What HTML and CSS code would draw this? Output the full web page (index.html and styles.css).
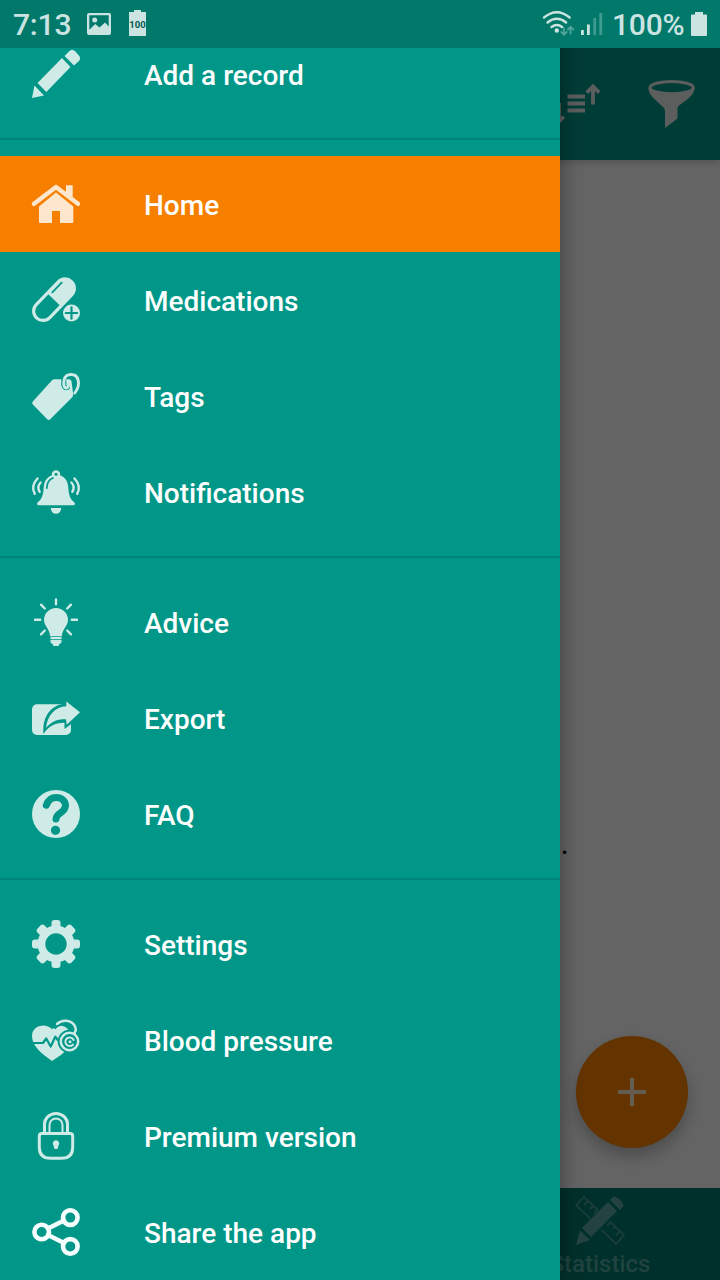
FILE: index.html
```html
<!DOCTYPE html>
<html lang="en">
<head>
<meta charset="utf-8">
<title>Home</title>
<link rel="stylesheet" href="styles.css">
</head>
<body>
<div class="screen">
  <div class="page">
    <header class="appbar">
      <svg class="sort" viewBox="0 0 48 48"><path d="M15.500 16.500h17.500M15.500 23.500h17.500M15.500 30.500h17.500M41 24.500V7M34.800 12.700L41 6.500l6.200 6.200M7 23v18M1.500 36l5.500 5.500 4.800-5"/></svg>
      <svg class="funnel" viewBox="0 0 48 48"><path d="M.5 8c0 5 3 8 6 11l9 8.500c1 1 1.500 2 1.500 4V48l12.500-9.500V29c0-1.500.5-2.500 1.500-3.500l9.500-7c3-3 6-6 6-10.500z"/><ellipse cx="23.700" cy="7.700" rx="21.600" ry="6.200"/></svg>
    </header>
    <main class="content">
      <p class="message">.</p>
      <button class="fab" aria-label="Add"><svg viewBox="0 0 28 28"><path d="M14 0v28M0 14h28"/></svg></button>
    </main>
    <nav class="tabs">
      <div class="tab">
        <svg viewBox="0 0 48 48">
          <path class="ruler" d="M0 8L8 0l40 38-8 9zM12 4l-4 4M17 9l-3 3M22 13l-4 4M35 25l-4 4M40 29l-3 3M44 34l-4 4"/>
          <path class="pen-gap" d="M8 30L36 2l9 9-28 28L1 47z"/>
          <path d="M0 48l4-15 10 10zM6 31L32 5l9 9-26 26zM34 3l3-3c3-2 13 7 10 10l-3 3z"/>
        </svg>
        <span>Statistics</span>
      </div>
    </nav>
  </div>
  <div class="scrim"></div>

  <aside class="drawer">
    <ul class="group">
      <li class="item"><svg viewBox="0 0 48 48"><path d="M0 48L2.500 35.500 12 45.500zM5.500 33L30 8l8.500 9-24.200 25zM32.500 6l4.200-4.300c2-2.200 4.500-2.200 6.500-.4L46.500 5c2 2 2 4.300.5 6l-5 4.500z"/></svg><span>Add a record</span></li>
    </ul>
    <ul class="group">
      <li class="item active"><svg viewBox="0 0 48 48"><path d="M34 5.300h6.700v13L34 13zM7 26.500L24 12.500l17.300 14V42q0 1-1 1H28V31h-8v12H8q-1 0-1-1z"/><path class="line roof" d="M2 23.800L24 6.900l22 16.900"/></svg><span>Home</span></li>
      <li class="item"><svg viewBox="0 0 48 48">
        <g transform="translate(22 23.700) rotate(-46)"><rect class="line" x="-25.200" y="-9.400" width="50.400" height="18.800" rx="9.400"/><path d="M0-10h16a10 10 0 0 1 0 20H0z"/></g>
        <path class="cut thin" d="M20.300 16.300l9.400-9.600"/><circle class="hole" cx="39.500" cy="37" r="10.200"/><circle cx="39.500" cy="37" r="8.500"/><path class="cut" d="M39.500 31.300v11.400M33.800 37h11.400"/></svg><span>Medications</span></li>
      <li class="item"><svg viewBox="0 0 48 48"><path d="M22.500 7.300L37 7.300q2 0 2.500 2l1.700 13q.2 2-1.200 3.300L18.500 47q-1.800 1.800-3.300.2L.8 32.500q-1.500-1.700.2-3.200L20 8.300q1-1 2.500-1z"/><path class="cut wide" d="M31.800 8v5q.8 3.500 3.500 2.500"/><path class="line ring" d="M42.800 21c3-4 4.300-9.500 3.300-13-2-7.500-12.500-7-14 0-.6 3-.6 7.500 2 8 1.700.2 2.200-1 2.200-3"/></svg><span>Tags</span></li>
      <li class="item"><svg viewBox="0 0 48 48"><path d="M24 2.200a4 4 0 0 1 4 5.100c5 1.800 8 6 8.300 12.200.4 7 1.700 11.500 5.700 14.500 1.700 1.500 1 3.200-.7 3.200H6.700c-1.700 0-2.400-1.700-.7-3.200 4-3 5.300-7.500 5.700-14.500C12 13.300 15 9.100 20 7.300a4 4 0 0 1 4-5.100zM18.800 40h10.400c-.3 7.800-10.100 7.800-10.400 0z"/><circle class="hole" cx="24" cy="6.200" r="1.500"/><path class="cut thin" d="M14.800 20c.2-5 2.200-8.500 6.200-10"/><path class="line wave" d="M8.600 14.500q-4 4.200-.9 9.300M5.500 10.500q-7 7.500-2.700 15.300M39.400 14.500q4 4.200.9 9.300M42.500 10.500q7 7.500 2.700 15.300"/></svg><span>Notifications</span></li>
    </ul>
    <ul class="group">
      <li class="item"><svg viewBox="0 0 48 48"><path d="M24 10a12 12 0 0 1 12 12c0 6-5.500 8.500-6.200 16.200h-11.600C17.500 30.500 12 28 12 22a12 12 0 0 1 12-12zM18.500 39h11v2.200h-11zM18.500 42h11V44q0 1.500-2 1.800L26.500 48h-5l-1-2.200q-2-.3-2-1.800z"/><path class="line ray" d="M24 1.500v4.800M3 21.700h5.300M39.700 21.700h5.300M9 6.700l3.800 3.800M39 6.700l-3.800 3.800M9 36.300l3.800-3.800M39 36.300l-3.800-3.800"/></svg><span>Advice</span></li>
      <li class="item"><svg viewBox="0 0 48 48"><rect y="10.300" width="39" height="30.700" rx="5"/><path class="hole" d="M32 5l1 4.500C20 11 10 21 11.500 40c5-8 12-11.500 21-11.300V35L42 28l5-18z"/><path d="M34.300 7.500L48 18.300 34.700 30.700l-.7-5.400c-8.500-.3-14.500 2.200-20 8.500 1.500-12.500 9-21 20.300-21.500z"/></svg><span>Export</span></li>
      <li class="item"><svg viewBox="0 0 48 48"><circle cx="24" cy="24" r="24"/><path class="cut question" d="M14.300 15.200c2-5.200 5.300-7.700 10-7.700 5.200 0 9.200 3.500 9.200 8 0 7.500-9.300 7.200-9.500 13.500"/><circle class="hole" cx="23.500" cy="40.300" r="4.600"/></svg><span>FAQ</span></li>
    </ul>
    <ul class="group">
      <li class="item"><svg viewBox="0 0 48 48"><circle cx="24" cy="24" r="18.500"/><rect x="19.500" width="9" height="48" rx="3"/><rect y="19.500" width="48" height="9" rx="3"/><rect x="19" width="10" height="48" rx="3" transform="rotate(45 24 24)"/><rect x="19" width="10" height="48" rx="3" transform="rotate(-45 24 24)"/><circle class="hole" cx="24" cy="24" r="10.700"/></svg><span>Settings</span></li>
      <li class="item"><svg viewBox="0 0 48 48"><path d="M20 45C10 38 0 30 0 20 0 10 13 6 20 13.300 26 7 34 9 37 15v17C32 37 26 41 20 45z"/><circle class="hole" cx="37.500" cy="25.500" r="11.700"/><path class="cut" d="M23 12c5-6 16-5 19 2M0 27h11l3.200-4.500 4.500 8 4.600-9.800 2.500 3.300"/><path class="line tube" d="M25 8c4.500-4.500 13-4.500 17 .7 2.200 3 2 6 .7 8"/><circle class="line tube" cx="37.500" cy="25.500" r="8.700"/><path class="line gauge" d="M41 28.500a4.300 4.300 0 1 1 .6-4.500"/><circle cx="38" cy="25.700" r="1.500"/></svg><span>Blood pressure</span></li>
      <li class="item"><svg viewBox="0 0 48 48"><path class="line lock" d="M10 21.500h28q2.700 0 2.700 2.700V35q0 11.300-11 11.300H18.300Q7.300 46.300 7.300 35V24.200q0-2.700 2.700-2.700zM12.500 21v-8.500a11.500 11.100 0 0 1 23 0V21"/><path class="line gauge" d="M17.500 21v-8a6.500 6.500 0 0 1 13 0v8"/><path d="M24 28.300a3.200 3.200 0 0 1 2.500 5.300l-1 3.400h-3l-1-3.400a3.200 3.200 0 0 1 2.500-5.300z"/></svg><span>Premium version</span></li>
      <li class="item share"><svg viewBox="0 0 48 48"><path class="line" d="M16 20.500l16-8M16 27l16 8"/><circle class="line" cx="38.300" cy="9.600" r="7.300"/><circle class="line" cx="9.700" cy="24" r="7.300"/><circle class="line" cx="38.300" cy="38.400" r="7.300"/></svg><span>Share the app</span></li>
    </ul>
  </aside>

  <div class="status">
    <span class="clock">7:13</span>
    <svg class="photo" viewBox="0 0 24 22"><path fill-rule="evenodd" d="M2 0h20q2 0 2 2v18q0 2-2 2H2q-2 0-2-2V2Q0 0 2 0zM2.300 2.300v14.500l6-5.800 4.200 3.500 5.500-5 3.700 4V2.300z"/><circle cx="7.700" cy="7" r="2.500"/></svg>
    <span class="charge">100</span>
    <svg class="wifi" viewBox="0 0 32 24"><path d="M1 5.500q12.800-10.500 25.600 0M4.500 10.500q9.300-7.500 18.600 0M8.500 15q5.300-4 10.600 0"/><circle cx="13.800" cy="18.500" r="2.200"/><path class="dim" d="M21 16v6.500M18.300 20l2.700 2.700 2.700-2.700M27.500 21.500V15M24.800 17.500l2.700-2.700 2.700 2.700"/></svg>
    <svg class="signal" viewBox="0 0 22 24"><path d="M0 18h2.800v5H0zM6 12.500h2.800V23H6z"/><path class="dim" d="M12.300 6h2.800v17h-2.800zM18.300 1h2.800v22h-2.800z"/></svg>
    <span class="percent">100%</span>
    <svg class="battery" viewBox="0 0 16 24"><path d="M4 0h8v2.500h3q1 0 1 1V23q0 1-1 1H1q-1 0-1-1V3.500q0-1 1-1h3z"/></svg>
  </div>
</div>
</body>
</html>
```
FILE: styles.css
```css
* { box-sizing: border-box; }
body { margin: 0; font-family: Roboto, "Liberation Sans", sans-serif; font-weight: 500; }
svg { display: block; flex: none; overflow: visible; }
.screen { position: relative; width: 720px; height: 1280px; overflow: hidden; }

.page { height: 100%; display: flex; flex-direction: column; background: #fafafa; }
.appbar { height: 160px; padding: 48px 24px 0 0; background: #009788; display: flex; align-items: center; justify-content: flex-end; gap: 48px; box-shadow: 0 2px 8px rgba(0,0,0,.2); }
.appbar svg { width: 48px; height: 48px; }
.sort { fill: none; stroke: #e6eae9; stroke-width: 3.800; }
.funnel { fill: #e6eae9; }
.funnel ellipse { fill: #009788; stroke: #e6eae9; stroke-width: 3.200; }
.content { flex: 1; display: flex; flex-direction: column; justify-content: space-between; align-items: flex-end; padding: 663px 32px 40px 0; }
.message { margin: 0; padding-right: 119px; font-size: 32px; line-height: 40px; font-weight: 400; color: #000; }
.fab { width: 112px; height: 112px; padding: 0; border: 0; border-radius: 50%; background: #f77f00; display: flex; align-items: center; justify-content: center; box-shadow: 0 8px 16px rgba(0,0,0,.25); }
.fab svg { width: 28px; height: 28px; stroke: #fff; stroke-width: 4; opacity: .8; }
.tabs { height: 92px; background: #00796b; display: flex; justify-content: flex-end; }
.tab { width: 240px; padding-top: 8px; display: flex; flex-direction: column; align-items: center; gap: 4px; color: #50a89e; font-size: 24px; line-height: 28px; }
.tab svg { width: 48px; height: 50px; fill: #5aa8a0; }
.tab .ruler { fill: none; stroke: #409a8e; stroke-width: 1.800; }
.tab .pen-gap { fill: #00796b; stroke: #00796b; stroke-width: 3; }
.scrim { position: absolute; inset: 0; background: rgba(0,0,0,.6); }

.drawer { position: absolute; top: 0; bottom: 0; left: 0; width: 560px; background: #009788; color: #fff; display: flex; flex-direction: column; justify-content: flex-end; box-shadow: 0 0 20px rgba(0,0,0,.4); }
.group { list-style: none; margin: 0; padding: 0; }
.group + .group { margin-top: 16px; padding-top: 16px; border-top: 2px solid #00857a; }
.item { --bg: #009788; --icon: #ceebe7; height: 96px; padding-left: 32px; display: flex; align-items: center; gap: 64px; font-size: 28px; line-height: 36px; }
.item span { padding-top: 4px; }
.item.active { --bg: #f77f00; --icon: #fde6cb; background: #f77f00; }
.item.share { --icon: #f5fffe; }
.item svg { width: 48px; height: 48px; fill: var(--icon); }
.item .line { fill: none; stroke: var(--icon); stroke-width: 3.200; stroke-linecap: round; stroke-linejoin: round; }
.item .roof { stroke-width: 4.400; }
.item .ring { stroke-width: 2.900; }
.item .wave { stroke-width: 2.400; }
.item .ray { stroke-width: 2.400; }
.item .tube { stroke-width: 2.500; }
.item .gauge { stroke-width: 2; }
.item .lock { stroke-width: 3; }
.item.share .line { stroke-width: 4.600; }
.item .hole { fill: var(--bg); }
.item .cut { fill: none; stroke: var(--bg); stroke-width: 2.200; stroke-linecap: round; stroke-linejoin: round; }
.item .thin { stroke-width: 1.800; }
.item .wide { stroke-width: 5; }
.item .question { stroke-width: 7; }

.status { position: absolute; top: 0; left: 0; right: 0; height: 48px; padding: 0 13px; background: #00796b; display: flex; align-items: center; color: #cce4e1; fill: #cce4e1; font-size: 30px; line-height: 48px; }
.clock { width: 74px; letter-spacing: -.2px; padding-top: 1px; font-weight: 500; }
.photo { width: 24px; height: 22px; }
.charge { margin-left: 18px; width: 17px; height: 24px; background: #cce4e1; color: #00594f; font-size: 9.500px; font-weight: 700; line-height: 26px; position: relative; display: flex; justify-content: center; }
.charge::before { content: ""; position: absolute; top: -2px; left: 5px; width: 7px; height: 2px; background: #cce4e1; }
.wifi { width: 32px; height: 24px; margin-left: auto; }
.wifi path { fill: none; stroke: #cce4e1; stroke-width: 2.400; stroke-linecap: round; }
.wifi .dim { stroke: #4fa499; stroke-width: 1.800; }
.signal { width: 22px; height: 24px; margin-left: 6px; }
.signal .dim { fill: #409b90; }
.percent { margin-left: 9px; width: 74px; padding-top: 1px; margin-right: 5px; letter-spacing: -.2px; }
.battery { width: 16px; height: 24px; }
```
